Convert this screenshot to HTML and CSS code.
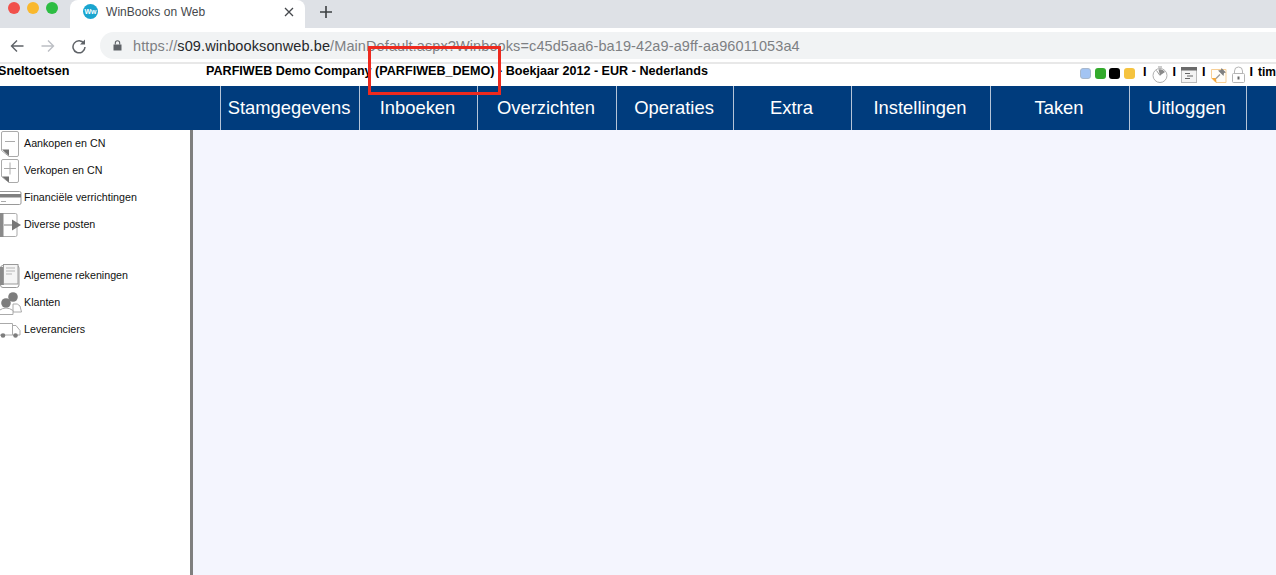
FILE: index.html
```html
<!DOCTYPE html>
<html lang="nl">
<head>
<meta charset="utf-8">
<title>WinBooks on Web</title>
<link rel="stylesheet" href="styles.css">
</head>
<body>
<div class="tabstrip">
  <div class="lights"><span class="light red"></span><span class="light yellow"></span><span class="light green"></span></div>
  <div class="tab">
    <span class="favicon">Ww</span>
    <span class="tab-title">WinBooks on Web</span>
    <svg class="tab-close" width="10" height="10" viewBox="0 0 10 10"><path d="M1 1l8 8M9 1l-8 8" stroke="#45484c" stroke-width="1.300" fill="none"/></svg>
  </div>
  <svg class="new-tab" width="14" height="14" viewBox="0 0 14 14"><path d="M7 1v12M1 7h12" stroke="#3c4043" stroke-width="1.600" fill="none"/></svg>
</div>
<div class="toolbar">
  <svg class="nav-icon" width="16" height="16" viewBox="0 0 16 16"><path d="M14.500 8H2.500M8 2.500L2.500 8 8 13.500" stroke="#5f6368" stroke-width="1.400" fill="none"/></svg>
  <svg class="nav-icon" width="16" height="16" viewBox="0 0 16 16"><path d="M1.500 8h12M8 2.500L13.500 8 8 13.500" stroke="#bcbfc4" stroke-width="1.400" fill="none"/></svg>
  <svg class="nav-icon" width="16" height="16" viewBox="0 0 16 16"><path d="M13 5.500A6 6 0 1 0 14 9" stroke="#5f6368" stroke-width="1.500" fill="none"/><path d="M14 1.500V6.500H9z" fill="#5f6368"/></svg>
  <div class="omnibox">
    <svg class="lock" width="9" height="11" viewBox="0 0 9 11"><path d="M0.500 4.500h8v6h-8z" fill="#5f6368"/><path d="M2.300 4.500V3a2.200 2.200 0 0 1 4.400 0v1.500" stroke="#5f6368" stroke-width="1.100" fill="none"/></svg>
    <span class="url"><span class="scheme">https://</span><span class="host">s09.winbooksonweb.be</span><span class="scheme">/MainDefault.aspx?Winbooks=c45d5aa6-ba19-42a9-a9ff-aa96011053a4</span></span>
  </div>
</div>
<header class="infobar">
  <span class="shortcuts">Sneltoetsen</span>
  <span class="company">PARFIWEB Demo Company (PARFIWEB_DEMO) - Boekjaar 2012 - EUR - Nederlands</span>
  <div class="tools">
    <span class="swatch blue"></span><span class="swatch lime"></span><span class="swatch black"></span><span class="swatch amber"></span>
    <span class="sep">I</span>
    <svg class="tool" width="16" height="17" viewBox="0 0 16 17"><circle cx="8" cy="9.500" r="7" fill="#fff" stroke="#b0b0b0"/><path d="M6 1h4" stroke="#999" fill="none"/><path d="M4.500 4.500L8 9.500" stroke="#999" fill="none"/><path d="M8 9.500L6.500 3.500a6.500 6.500 0 0 1 6.500 2.500z" fill="#8a8a8a"/></svg>
    <span class="sep">I</span>
    <svg class="tool" width="16" height="16" viewBox="0 0 16 16"><rect x="0.500" y="0.500" width="15" height="15" fill="#f4f4f4" stroke="#bbb"/><rect x="0" y="0" width="16" height="3.500" fill="#6a6a6a"/><path d="M4 6.500h5M6 9h6M4 11.500h5" stroke="#666" fill="none"/></svg>
    <span class="sep">I</span>
    <svg class="tool" width="16" height="16" viewBox="0 0 16 16"><path d="M0.500 2.500h14.500v13H5l-4.500-4.500z" fill="#fffdf8" stroke="#f7cf96"/><path d="M0.500 11l5 5-.5-5z" fill="#f5a83a"/><path d="M5 11.500l4-4" stroke="#999" stroke-width="1.200" fill="none"/><path d="M10.500 1l4.500 4.500-2 .5-.5 3L7 3.500l3-.5z" fill="#808080"/></svg>
    <svg class="tool lock-tool" width="13" height="17" viewBox="0 0 13 17"><rect x="0.500" y="7.500" width="12" height="9" rx="1" fill="#fff" stroke="#b5b5b5"/><path d="M2.500 7.500V5a4 4 0 0 1 8 0v2.500" stroke="#b5b5b5" fill="none"/><path d="M6.500 10.500v3" stroke="#666" stroke-width="2"/></svg>
    <span class="sep">I</span>
    <span class="user">tim</span>
  </div>
</header>
<nav class="mainnav">
  <a class="nav-item w139">Stamgegevens</a>
  <a class="nav-item w118">Inboeken</a>
  <a class="nav-item w139">Overzichten</a>
  <a class="nav-item w117">Operaties</a>
  <a class="nav-item w118">Extra</a>
  <a class="nav-item w139">Instellingen</a>
  <a class="nav-item w139">Taken</a>
  <a class="nav-item w118 last">Uitloggen</a>
</nav>
<div class="workspace">
  <aside class="sidebar">
    <ul class="menu">
      <li class="menu-item">
        <svg class="menu-icon" width="20" height="26" viewBox="0 0 20 26"><path d="M3 0.500h14a1.500 1.500 0 0 1 1.500 1.500v22a1.500 1.500 0 0 1-1.500 1.500H9l-7.500-6V2A1.500 1.500 0 0 1 3 .5z" fill="#fff" stroke="#aaa"/><path d="M2 18.500l7 6.500v-6.500z" fill="#707070"/><path d="M5 10.500h10" stroke="#aaa" fill="none"/></svg>
        <span>Aankopen en CN</span>
      </li>
      <li class="menu-item">
        <svg class="menu-icon" width="20" height="24" viewBox="0 0 20 24"><path d="M3 0.500h14a1.500 1.500 0 0 1 1.500 1.500v20a1.500 1.500 0 0 1-1.500 1.500H9l-7.500-6V2A1.500 1.500 0 0 1 3 .5z" fill="#fff" stroke="#aaa"/><path d="M2 17.500l7 6v-6z" fill="#707070"/><path d="M4 9.500h12M10 3.500v12" stroke="#aaa" fill="none"/></svg>
        <span>Verkopen en CN</span>
      </li>
      <li class="menu-item">
        <svg class="menu-icon" width="22" height="14" viewBox="0 0 22 14"><rect x="-2" y="0.500" width="23" height="13" rx="1.500" fill="#fff" stroke="#999"/><rect x="-2" y="3" width="23" height="3.500" fill="#808080"/><path d="M1 10.500h5" stroke="#aaa" fill="none"/></svg>
        <span>Financiële verrichtingen</span>
      </li>
      <li class="menu-item">
        <svg class="menu-icon" width="24" height="24" viewBox="0 0 24 24"><path d="M0.500 0.500h15a1.500 1.500 0 0 1 1.500 1.500v20a1.500 1.500 0 0 1-1.500 1.500H.5z" fill="#fff" stroke="#aaa"/><rect x="0" y="0" width="3.500" height="24" fill="#8a8a8a"/><path d="M4 12h9" stroke="#aaa" stroke-width="1.500"/><path d="M12 6.500l9 5.500-9 5.500z" fill="#777"/></svg>
        <span>Diverse posten</span>
      </li>
      <li class="menu-item spaced">
        <svg class="menu-icon" width="20" height="24" viewBox="0 0 20 24"><rect x="0.500" y="1.500" width="18.500" height="22" rx="2.500" fill="#fff" stroke="#999"/><rect x="0" y="3" width="4" height="18" fill="#8a8a8a"/><rect x="3.500" y="0.500" width="14.500" height="19.500" fill="#f5f5f5" stroke="#999"/><path d="M6 4h9M6 7h9M6 10h6" stroke="#b5b5b5" fill="none"/></svg>
        <span>Algemene rekeningen</span>
      </li>
      <li class="menu-item">
        <svg class="menu-icon" width="22" height="24" viewBox="0 0 22 24"><circle cx="13" cy="6" r="4.800" fill="#7d7d7d"/><path d="M13 13q5-1 7 2l1.500 6H13z" fill="#fff" stroke="#aaa"/><circle cx="6" cy="12" r="4.800" fill="#7d7d7d"/><path d="M-1 23.500v-4q7-5 14 0v4z" fill="#fff" stroke="#aaa"/></svg>
        <span>Klanten</span>
      </li>
      <li class="menu-item">
        <svg class="menu-icon" width="22" height="16" viewBox="0 0 22 16"><path d="M-1 1.500h13.500v11.500H-1zM12.500 3.500h3.500l4 5v4.500h-7.500z" fill="#fff" stroke="#aaa"/><circle cx="3" cy="13.500" r="2.300" fill="#7d7d7d"/><circle cx="15.500" cy="13.500" r="2.300" fill="#7d7d7d"/></svg>
        <span>Leveranciers</span>
      </li>
    </ul>
  </aside>
  <main class="content"></main>
</div>
<div class="highlight"></div>
</body>
</html>
```
FILE: styles.css
```css
* { box-sizing: border-box; }
html, body { margin: 0; padding: 0; height: 100%; overflow: hidden; }
body {
  width: 1276px;
  height: 575px;
  background: #fff;
  font-family: "Liberation Sans", Arial, sans-serif;
  color: #000;
  display: flex;
  flex-direction: column;
  position: relative;
}
.tabstrip {
  height: 28px;
  flex: none;
  background: #dee1e6;
  display: flex;
  align-items: center;
}
.lights { width: 70px; flex: none; display: flex; gap: 7px; padding-left: 8px; margin-top: -12px; }
.light { width: 12px; height: 12px; border-radius: 50%; }
.red { background: #f1504b; }
.yellow { background: #f9b82d; }
.green { background: #2dbd43; }
.tab {
  width: 235px;
  height: 28px;
  flex: none;
  background: #fff;
  border-radius: 8px 8px 0 0;
  display: flex;
  align-items: center;
  padding: 0 11px 5px 13px;
}
.favicon {
  width: 15px;
  height: 15px;
  border-radius: 50%;
  background: #1aa5cf;
  color: #fff;
  font-size: 7px;
  font-weight: bold;
  line-height: 15px;
  text-align: center;
  flex: none;
}
.tab-title { flex: 1; margin-left: 8px; font-size: 12px; color: #45484c; letter-spacing: 0.05px; }
.new-tab { margin: -4px 0 0 14px; }
.toolbar {
  height: 36px;
  flex: none;
  background: #fff;
  border-bottom: 2px solid #e8e8e8;
  display: flex;
  align-items: center;
  padding: 4px 0 3px 9px;
  gap: 15px;
}
.nav-icon { flex: none; }
.omnibox {
  flex: 1;
  height: 27px;
  margin-left: -2px;
  background: #f1f3f4;
  border-radius: 14px 0 0 14px;
  display: flex;
  align-items: center;
  padding-left: 13px;
}
.lock { flex: none; }
.url { margin-left: 11px; font-size: 14.500px; letter-spacing: 0.1px; white-space: nowrap; }
.scheme { color: #7d8083; }
.host { color: #26282b; }
.infobar {
  height: 22px;
  flex: none;
  display: flex;
  align-items: flex-start;
  font-size: 12.600px;
  line-height: 14px;
  font-weight: bold;
  white-space: nowrap;
  overflow: hidden;
}
.shortcuts { width: 206px; flex: none; margin-left: -2px; }
.company { flex: none; margin-left: 2px; }
.tools {
  margin-left: auto;
  display: flex;
  align-items: center;
  width: 196px;
  height: 22px;
  flex: none;
}
.swatch { width: 11px; height: 11px; border-radius: 3px; margin: -3px 3.500px 0 0; flex: none; }
.blue { background: #a3c4f3; border: 1px solid #a8b8cc; }
.lime { background: #33aa2c; }
.black { background: #000; }
.amber { background: #f5c33f; }
.sep { margin: -6px 5px 0; flex: none; }
.tool { flex: none; margin-top: -1px; }
.lock-tool { margin-left: 5px; }
.user { flex: none; margin-top: -6px; font-size: 12px; }
.mainnav {
  height: 44px;
  flex: none;
  background: #003c7d;
  display: flex;
  padding-left: 220px;
}
.nav-item {
  height: 44px;
  flex: none;
  border-left: 1px solid #b4c4d8;
  color: #fff;
  font-size: 18.400px;
  line-height: 44px;
  text-align: center;
  padding-right: 2px;
}
.last { border-right: 1px solid #b4c4d8; }
.w117 { width: 117px; }
.w118 { width: 118px; }
.w139 { width: 139px; }
.workspace { flex: 1; display: flex; min-height: 0; }
.sidebar {
  width: 193px;
  flex: none;
  border-right: 3px solid #7f7f7f;
  background: #fff;
}
.menu { list-style: none; margin: 0; padding: 0; }
.menu-item {
  height: 27px;
  display: flex;
  align-items: center;
  position: relative;
  padding: 0 0 2px 24px;
  font-size: 10.700px;
  color: #111;
}
.spaced { margin-top: 24px; }
.menu-icon { position: absolute; left: 0; top: 50%; transform: translateY(-50%); }
.content { flex: 1; background: #f4f5fe; }
.highlight {
  position: absolute;
  left: 368px;
  top: 46px;
  width: 133px;
  height: 49px;
  border: 3px solid #ee2a1f;
  pointer-events: none;
}
```
